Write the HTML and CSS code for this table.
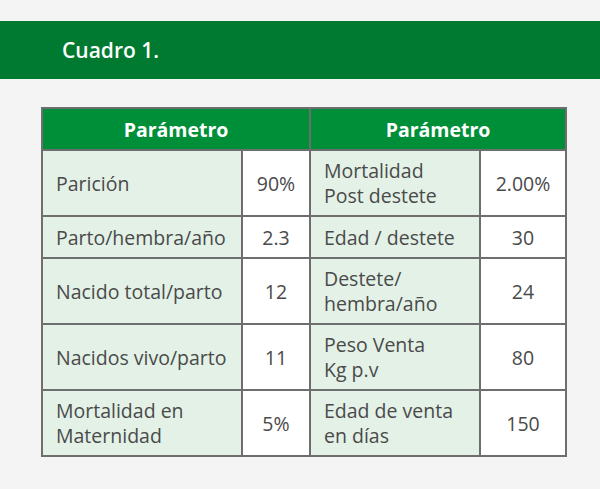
FILE: index.html
```html
<!DOCTYPE html>
<html lang="es">
<head>
<meta charset="utf-8">
<link rel="stylesheet" href="styles.css">
</head>
<body>
<div class="banner"><span class="banner-title">Cuadro 1.</span></div>
<div class="wrap">
<table class="data">
  <colgroup>
    <col class="c1"><col class="c2"><col class="c3"><col class="c4">
  </colgroup>
  <thead>
    <tr><th colspan="2">Parámetro</th><th colspan="2">Parámetro</th></tr>
  </thead>
  <tbody>
    <tr class="tall"><td class="lbl">Parición</td><td class="val">90%</td><td class="lbl">Mortalidad<br>Post destete</td><td class="val">2.00%</td></tr>
    <tr class="short"><td class="lbl">Parto/hembra/año</td><td class="val">2.3</td><td class="lbl">Edad / destete</td><td class="val">30</td></tr>
    <tr class="tall"><td class="lbl">Nacido total/parto</td><td class="val">12</td><td class="lbl">Destete/<br>hembra/año</td><td class="val">24</td></tr>
    <tr class="tall"><td class="lbl">Nacidos vivo/parto</td><td class="val">11</td><td class="lbl">Peso Venta<br>Kg p.v</td><td class="val">80</td></tr>
    <tr class="tall"><td class="lbl">Mortalidad en<br>Maternidad</td><td class="val">5%</td><td class="lbl">Edad de venta<br>en días</td><td class="val">150</td></tr>
  </tbody>
</table>
</div>
</body>
</html>
```
FILE: styles.css
```css
html, body {
  margin: 0;
  padding: 0;
  background: #f4f4f4;
  font-family: "Open Sans", "Liberation Sans", sans-serif;
}
.banner {
  margin-top: 21px;
  height: 58px;
  background: #007a30;
  display: flex;
  align-items: center;
  padding-left: 62px;
}
.banner-title {
  color: #ffffff;
  font-size: 21px;
  font-weight: 600;
}
.wrap {
  padding: 28px 0 0 41px;
}
.data {
  border-collapse: collapse;
  width: 524px;
  table-layout: fixed;
  color: #4a4a4a;
  font-size: 19.5px;
  line-height: 25px;
}
.c1 { width: 200px; }
.c2 { width: 68px; }
.c3 { width: 170px; }
.c4 { width: 86px; }
.data th, .data td {
  border: 2px solid #6e6e6e;
}
.data th {
  background: #008f39;
  color: #ffffff;
  font-weight: 700;
  font-size: 19.5px;
  height: 40px;
  padding: 0;
  text-align: center;
}
.data td {
  padding: 0 2px 0 13px;
  white-space: nowrap;
}
.data td.val {
  background: #ffffff;
  text-align: center;
  padding: 0;
}
.data td.lbl {
  background: #e3f1e7;
}
.tall td { height: 64px; }
.short td { height: 40px; }
```
